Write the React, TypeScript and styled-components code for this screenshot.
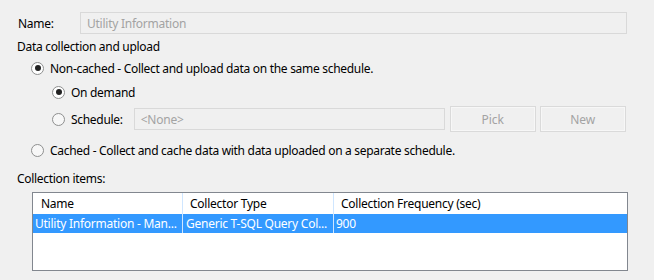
import React from 'react';
import styled, { createGlobalStyle } from 'styled-components';

const Global = createGlobalStyle`
  html, body { margin: 0; padding: 0; background: #f0f0f0; }
  body {
    font-family: "Segoe UI", "Noto Sans", "Open Sans", sans-serif;
    font-size: 12px;
    color: #000;
  }
`;

const Page = styled.div`
  width: 654px;
  height: 280px;
  background: #f0f0f0;
  display: flex;
  flex-direction: column;
  overflow: hidden;
`;

const Row = styled.div<{ $top: number; $h: number; $indent: number }>`
  display: flex;
  align-items: center;
  height: ${(p) => p.$h}px;
  margin-top: ${(p) => p.$top}px;
  padding-left: ${(p) => p.$indent}px;
  white-space: nowrap;
`;

const Label = styled.span<{ $w?: number }>`
  width: ${(p) => (p.$w ? `${p.$w}px` : 'auto')};
  flex-shrink: 0;
  letter-spacing: -0.3px;
`;

const Field = styled.div<{ $w: number; $gap?: number }>`
  box-sizing: border-box;
  width: ${(p) => p.$w}px;
  height: 22px;
  margin-left: ${(p) => p.$gap ?? 0}px;
  border: 1px solid #d9d9d9;
  background: #f0f0f0;
  color: #a3a3a3;
  padding-left: 6px;
  display: flex;
  align-items: center;
  letter-spacing: -0.25px;
  flex-shrink: 0;
`;

const Button = styled.div<{ $gap: number }>`
  box-sizing: border-box;
  width: 86px;
  height: 26px;
  margin-left: ${(p) => p.$gap}px;
  border: 1px solid #dadada;
  outline: 1px solid #f7f7f7;
  outline-offset: -2px;
  background: #f0f0f0;
  color: #a3a3a3;
  display: flex;
  align-items: center;
  justify-content: center;
  flex-shrink: 0;
`;

const RadioCircle = styled.span<{ $on: boolean }>`
  box-sizing: border-box;
  width: 13px;
  height: 13px;
  border-radius: 50%;
  border: 1px solid #8e8f8f;
  background: ${(p) => (p.$on ? '#ffffff' : '#f7f7f7')};
  display: flex;
  align-items: center;
  justify-content: center;
  margin-right: 6px;
  flex-shrink: 0;

  &::after {
    content: '';
    display: ${(p) => (p.$on ? 'block' : 'none')};
    width: 6px;
    height: 6px;
    border-radius: 50%;
    background: #222;
  }
`;

const Table = styled.div`
  box-sizing: border-box;
  margin: 4px 0 0 32px;
  width: 596px;
  height: 79px;
  border: 1px solid #82878f;
  background: #fff;
  display: flex;
  flex-direction: column;
`;

const TableRow = styled.div<{ $selected?: boolean; $h: number }>`
  display: grid;
  grid-template-columns: 149px 151px 1fr;
  height: ${(p) => p.$h}px;
  background: ${(p) => (p.$selected ? '#3399ff' : '#ffffff')};
  color: ${(p) => (p.$selected ? '#ffffff' : '#000000')};
`;

const Cell = styled.div<{ $pad: number; $divider: string }>`
  display: flex;
  align-items: center;
  padding-left: ${(p) => p.$pad}px;
  white-space: nowrap;
  overflow: hidden;
  letter-spacing: -0.25px;
  & + & {
    border-left: 1px solid ${(p) => p.$divider};
  }
`;

const Radio = ({ on, children }: { on: boolean; children: React.ReactNode }) => (
  <>
    <RadioCircle $on={on} />
    <Label>{children}</Label>
  </>
);

export default function App() {
  return (
    <Page>
      <Global />
      <Row $top={12} $h={22} $indent={18}>
        <Label $w={62}>Name:</Label>
        <Field $w={547}>Utility Information</Field>
      </Row>
      <Row $top={2} $h={20} $indent={17}>
        <Label>Data collection and upload</Label>
      </Row>
      <Row $top={2} $h={20} $indent={31}>
        <Radio on>Non-cached - Collect and upload data on the same schedule.</Radio>
      </Row>
      <Row $top={4} $h={20} $indent={52}>
        <Radio on>On demand</Radio>
      </Row>
      <Row $top={4} $h={26} $indent={52}>
        <Radio on={false}>Schedule:</Radio>
        <Field $w={311} $gap={11}>&lt;None&gt;</Field>
        <Button $gap={5}>Pick</Button>
        <Button $gap={4}>New</Button>
      </Row>
      <Row $top={8} $h={20} $indent={31}>
        <Radio on={false}>Cached - Collect and cache data with data uploaded on a separate schedule.</Radio>
      </Row>
      <Row $top={8} $h={20} $indent={17}>
        <Label>Collection items:</Label>
      </Row>
      <Table>
        <TableRow $h={21}>
          <Cell $pad={8} $divider="#e8e8e8">Name</Cell>
          <Cell $pad={7} $divider="#e8e8e8">Collector Type</Cell>
          <Cell $pad={7} $divider="#e8e8e8">Collection Frequency (sec)</Cell>
        </TableRow>
        <TableRow $selected $h={19}>
          <Cell $pad={2} $divider="#cfe6ff">Utility Information - Man...</Cell>
          <Cell $pad={3} $divider="#cfe6ff">Generic T-SQL Query Col...</Cell>
          <Cell $pad={2} $divider="#cfe6ff">900</Cell>
        </TableRow>
      </Table>
    </Page>
  );
}
